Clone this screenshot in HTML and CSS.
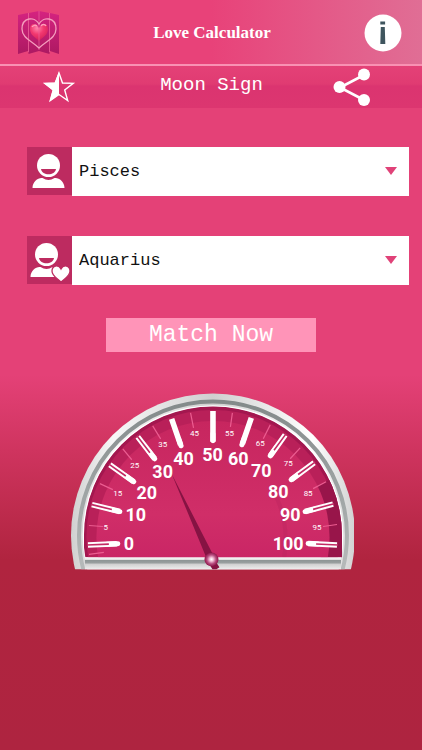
FILE: index.html
```html
<!DOCTYPE html>
<html lang="en">
<head>
<meta charset="utf-8">
<meta name="viewport" content="width=device-width, initial-scale=1">
<title>Love Calculator</title>
<link rel="stylesheet" href="styles.css">
</head>
<body>
<header class="topbar">
  <a class="logo" href="#" aria-label="Home">
    <svg width="42" height="44" viewBox="0 0 42 44">
      <defs>
        <linearGradient id="panel" x1="0" y1="0" x2="0" y2="1"><stop offset="0" stop-color="#d52380"/><stop offset="1" stop-color="#ad1962"/></linearGradient>
        <radialGradient id="heart" cx=".4" cy=".25" r=".8"><stop offset="0" stop-color="#ff86ac"/><stop offset=".45" stop-color="#f23870"/><stop offset="1" stop-color="#cf1d55"/></radialGradient>
      </defs>
      <path fill="url(#panel)" d="M0 4l10-2v38l-10 3zM10.500 2L21 0v40l-10.500 3zM21 0l10.500 2v41L21 40zM32 2l9 2v39l-9-3z"/>
      <path fill="url(#heart)" d="M21 17C18 11 12 12 12 18c0 6 5 8 9 12 4-4 9-6 9-12 0-6-6-7-9-1z"/>
      <path d="M10.500 2v39M21 0v39M31.500 2v39" stroke="#ed639d" stroke-width=".7"/>
      <path d="M14 16c1-2 4-2 5-1M23 15c1-2 4-2 5 0" fill="none" stroke="#ff9dbb" stroke-width="1.500"/>
      <path fill="none" stroke="#f59dbd" stroke-width="1.300" d="M21 13C17 5 4 6 4 18c0 9 10 12 17 19 7-7 17-10 17-19C38 6 25 5 21 13z"/>
    </svg>
  </a>
  <h1 class="title">Love Calculator</h1>
  <button class="icon-button" type="button" aria-label="Information">
    <svg width="38" height="38" viewBox="0 0 38 38">
      <circle cx="19" cy="19" r="18.500" fill="#fff"/>
      <path fill="#3f555e" d="M16.300 7.500h4.800v3h-4.800zM16.800 13h4l.5 17h-5z"/>
    </svg>
  </button>
</header>
<nav class="subbar">
  <button class="icon-button" type="button" aria-label="Favourite">
    <svg width="34" height="34" viewBox="0 0 34 34">
      <path fill="none" stroke="#fff" stroke-width="1.400" d="M17 3l3.500 10 10.700.3-8.500 6.700 3 10.500-8.700-6-8.700 6 3-10.500-8.500-6.700 10.700-.3z"/>
      <path fill="#fff" d="M17 1.500v23l-9.500 7 3.100-11.200L1.500 13l11-.3z"/>
    </svg>
  </button>
  <h2 class="subtitle">Moon Sign</h2>
  <button class="icon-button" type="button" aria-label="Share">
    <svg width="38" height="38" viewBox="0 0 38 38">
      <path d="M31 7L7 19.500 31 32" fill="none" stroke="#fff" stroke-width="2.600"/>
      <g fill="#fff"><circle cx="31" cy="6.500" r="6"/><circle cx="6.500" cy="19" r="6"/><circle cx="31" cy="32" r="6"/></g>
    </svg>
  </button>
</nav>
<main>
  <form class="form">
    <div class="field">
      <label class="avatar" for="sign-one" aria-label="Your sign">
        <svg width="45" height="48" viewBox="0 0 45 48">
          <circle cx="21.500" cy="18.500" r="11.500" fill="#fff"/>
          <path fill="#bd2b60" d="M14 22h15c-1 7-14 7-15 0z"/>
          <path fill="#fff" d="M5.500 41c0-6 5-10 9-10h1c4 2.500 8 2.500 12 0h1c4 0 9 4 9 10z"/>
        </svg>
      </label>
      <div class="picker">
        <select id="sign-one"><option>Pisces</option></select>
        <svg class="caret" width="12" height="8" viewBox="0 0 12 8"><path fill="#e04278" d="M0 0h12L6 8z"/></svg>
      </div>
    </div>
    <div class="field">
      <label class="avatar" for="sign-two" aria-label="Partner's sign">
        <svg width="45" height="48" viewBox="0 0 45 48">
          <circle cx="19.500" cy="18.500" r="11.500" fill="#fff"/>
          <path fill="#bd2b60" d="M12 22h15c-1 7-14 7-15 0z"/>
          <path fill="#fff" d="M3.500 41c0-6 5-10 9-10h1c4 2.500 8 2.500 12 0h1c4 0 9 4 9 10z"/>
          <path fill="#fff" stroke="#bd2b60" stroke-width="1.300" d="M34 33C31.500 28 25 29.500 25 35c0 5 5 7 9 11 4.500-4 9-6 9-11 0-5.500-6.500-7-9-2z"/>
        </svg>
      </label>
      <div class="picker">
        <select id="sign-two"><option>Aquarius</option></select>
        <svg class="caret" width="12" height="8" viewBox="0 0 12 8"><path fill="#e04278" d="M0 0h12L6 8z"/></svg>
      </div>
    </div>
  </form>
  <button class="match" type="button">Match Now</button>
  <svg class="gauge" viewBox="67 393 288 178" role="img" aria-label="Match meter, 0 to 100">
    <defs>
      <linearGradient id="face" x1="0" y1="0" x2="0" y2="1"><stop offset="0" stop-color="#c7265f"/><stop offset=".4" stop-color="#d02e68"/><stop offset=".6" stop-color="#c92565"/></linearGradient>
      <linearGradient id="bar" x1="0" y1="0" x2="0" y2="1"><stop offset="0" stop-color="#fff"/><stop offset=".2" stop-color="#dedede"/><stop offset=".26" stop-color="#8f9696"/><stop offset=".48" stop-color="#9aa0a0"/><stop offset=".55" stop-color="#cfcfcf"/><stop offset="1" stop-color="#eee"/></linearGradient>
      <linearGradient id="rim" x1="0" y1="0" x2="1" y2="0"><stop offset="0" stop-color="#d0d0d0"/><stop offset=".15" stop-color="#f7f7f7"/><stop offset=".5" stop-color="#cfcfcf"/><stop offset=".85" stop-color="#fff"/><stop offset="1" stop-color="#d2d2d2"/></linearGradient>
      <linearGradient id="groove" x1="0" y1="1" x2="0" y2="0"><stop offset="0" stop-color="#c6c8c8"/><stop offset=".4" stop-color="#b4b8b8"/><stop offset="1" stop-color="#838a8a"/></linearGradient>
      <radialGradient id="hub"><stop offset="0" stop-color="#fff"/><stop offset=".25" stop-color="#f6c7dc"/><stop offset=".65" stop-color="#b64a7d"/><stop offset="1" stop-color="#8d1549"/></radialGradient>
      <clipPath id="base"><path d="M60 390h300v180H60z"/></clipPath>
      <clipPath id="dial"><path d="M83 558V536a129.500 129.500 0 0 1 259 0v22z"/></clipPath>
    </defs>
    <g clip-path="url(#base)">
      <circle cx="212.500" cy="536" r="142.500" fill="url(#rim)"/>
      <circle cx="212.500" cy="536" r="134.500" fill="none" stroke="url(#groove)" stroke-width="4"/>
      <circle cx="212.500" cy="536" r="130.800" fill="#fff"/>
    </g>
    <g clip-path="url(#dial)">
      <circle cx="212.500" cy="536" r="130" fill="#a3174f"/>
      <circle cx="212.500" cy="537" r="127" fill="#b92059"/>
      <path fill="#98154a" d="M317 486l30-14v90h-26z"/>
      <circle cx="212.500" cy="538" r="117" fill="url(#face)"/>
      <path d="M270 487q20 30 14 71" fill="none" stroke="#bd2560" stroke-width="4" opacity=".45"/>
    </g>
    <path fill="url(#bar)" d="M84 558h257v12H84z"/>
    <path stroke="#ec5d91" stroke-width="1.200" d="M88 526l14 1M99 484l13 6M122 449l9 11M152 426l8 13M190 413l3 15M232 413l-2 14M270 425l-7 14M300 448l-10 11M326 482l-13 7M337 525l-14 2M88 555l15-2"/>
    <g stroke="#fff" stroke-width="5.600">
      <path d="M87 545.500l29-1.200M91 505l28 7M109 465l24 17M137 437l17 22M171 419l9 26M212.500 411v31M251 418l-9 26M285 435l-15 21M314 463l-23 17M333 504.500l-28 7.500M337 545.500l-29-1.500"/>
      <path stroke-linecap="round" stroke-width="5" d="M106 544.700l11-.5M109 509.500l10 2.500M125 476.300l8 5.700M148 451.200l6 7.800M178 439l2.500 7M212.500 434v7M244 438l-2.500 7M276 447.400l-6 8.600M299 474l-8 6M315 509.300l-10 2.700M318 544.500l-10-.5"/>
    </g>
    <path stroke="#c32a64" stroke-width="1.600" d="M86 545.600l22-.9M90 504.800l21 5.200M108 464.300l17 12M136.200 436l13 17M285.800 434l-12 16.500M315 462.300l-17 12.500M334 504.200l-21 5.600M338 545.600l-22-1.100"/>
    <g class="minor">
      <text x="105" y="531">5</text><text x="117" y="496">15</text><text x="134" y="468">25</text><text x="162" y="447">35</text><text x="194" y="436">45</text><text x="229" y="436">55</text><text x="260" y="446">65</text><text x="288" y="466">75</text><text x="308" y="496">85</text><text x="317" y="531">95</text>
    </g>
    <g class="major">
      <text x="128" y="551">0</text><text x="135" y="521">10</text><text x="146" y="499">20</text><text x="162" y="478">30</text><text x="183" y="465">40</text><text x="212" y="461">50</text><text x="238" y="465">60</text><text x="261" y="477">70</text><text x="278" y="498">80</text><text x="290" y="521">90</text><text x="288" y="551">100</text>
    </g>
    <path fill="#861343" d="M171 474l43 84-7 3zM208 564l6-4 5 8-3 2h-4z"/>
    <circle cx="211" cy="560" r="7" fill="url(#hub)"/>
  </svg>
</main>
</body>
</html>
```
FILE: styles.css
```css
* {
  box-sizing: border-box;
}

body {
  margin: 0;
  min-height: 100vh;
  background: linear-gradient(#e44177 0, #e44177 375px, #cf345f 450px, #b0243f 560px, #ae2440 100%);
  color: #fff;
  font-family: "Liberation Mono", monospace;
}

button {
  padding: 0;
  border: 0;
  color: inherit;
  font: inherit;
}

svg {
  display: block;
}

.topbar,
.subbar {
  display: grid;
  align-items: center;
}

.topbar {
  grid-template-columns: 42px 1fr 38px;
  height: 66px;
  padding: 2px 20px 0 18px;
  border-bottom: 2px solid #f991b3;
  background: linear-gradient(90deg, #e84279 50%, #e06e95);
}

.title,
.subtitle {
  margin: 0;
  text-align: center;
}

.title {
  font: bold 17px/24px "Liberation Serif", serif;
}

.icon-button {
  background: none;
}

.subbar {
  grid-template-columns: 34px 1fr 38px;
  height: 42px;
  padding: 0 51px 0 42px;
  background: linear-gradient(#e44177, #e03b72 18px, #db3470 20px, #dc3670);
}

.subtitle {
  padding: 0 0 4px 14px;
  font-size: 19px;
  font-weight: 400;
  line-height: 24px;
}

.form {
  padding: 39px 13px 0 27px;
}

.field {
  display: flex;
  height: 49px;
}

.field + .field {
  margin-top: 40px;
}

.avatar {
  width: 45px;
  height: 48px;
  background: #bd2b60;
}

.picker {
  position: relative;
  flex: 1;
}

.picker select {
  width: 100%;
  height: 100%;
  padding: 0 32px 0 7px;
  border: 0;
  border-radius: 0;
  appearance: none;
  background: #fff;
  color: #111;
  font: 17px/24px "Liberation Mono", monospace;
}

.caret {
  position: absolute;
  top: 20px;
  right: 12px;
  pointer-events: none;
}

.match {
  display: block;
  width: 210px;
  max-width: 100%;
  height: 34px;
  margin: 33px auto 0;
  background: #ff94b8;
  font-size: 23px;
  line-height: 34px;
}

.gauge {
  width: 68%;
  margin: 41px auto 24px;
}

.gauge text {
  fill: #fff;
  font-family: Roboto, sans-serif;
  text-anchor: middle;
}

.minor text {
  font-size: 8px;
}

.major text {
  font-size: 18px;
  font-weight: 700;
}
```
